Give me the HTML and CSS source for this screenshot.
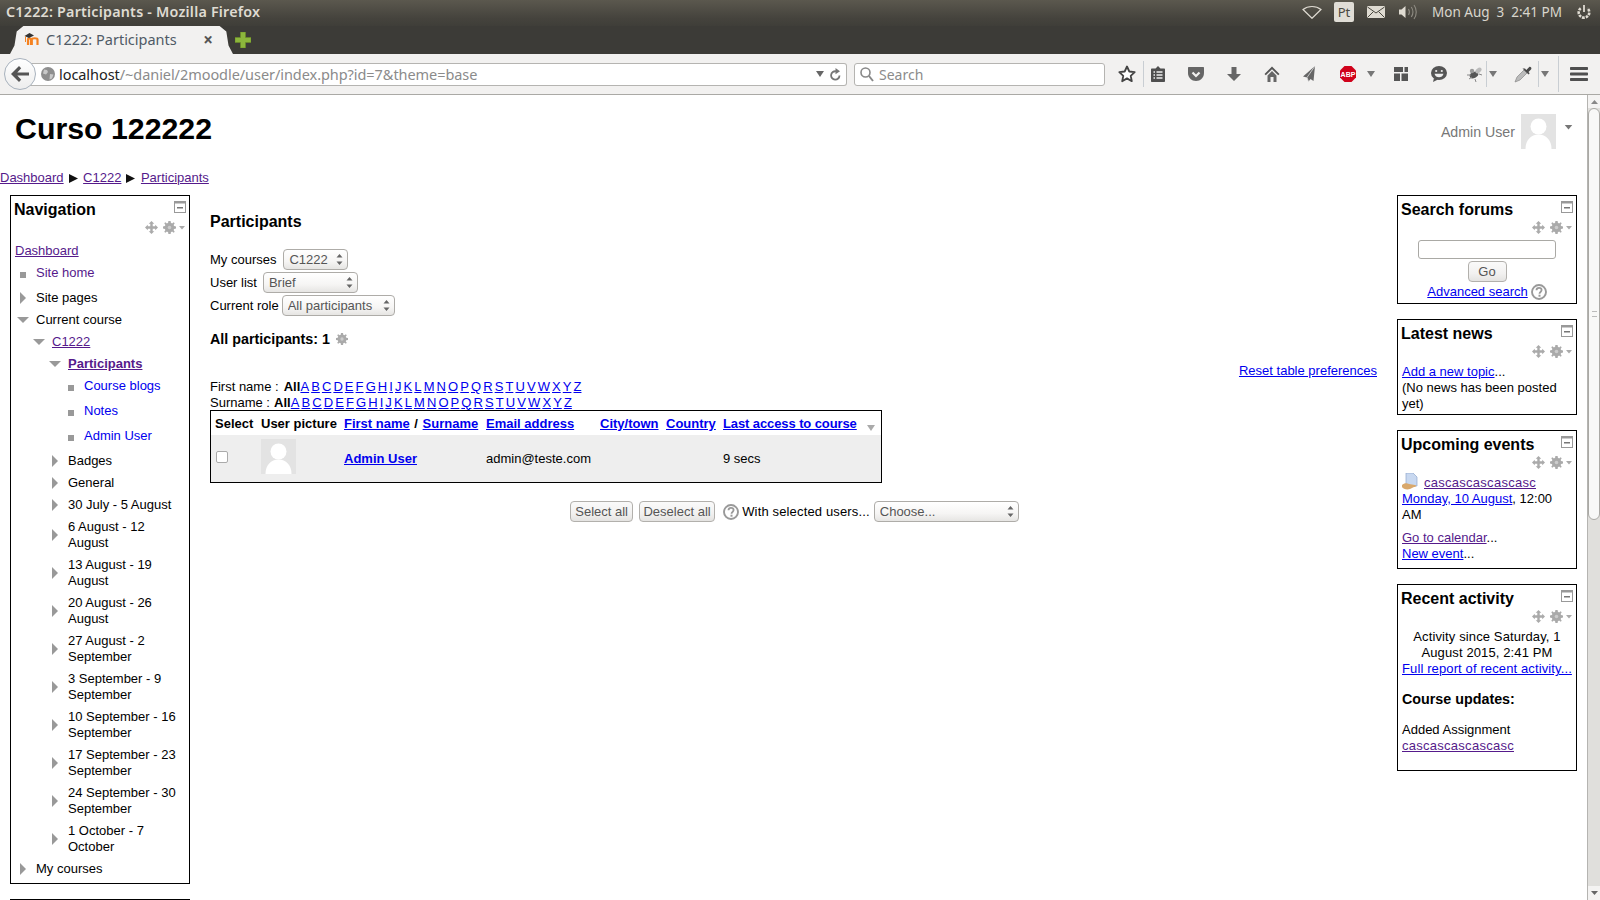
FILE: index.html
```html
<!DOCTYPE html>
<html lang="en">
<head>
<meta charset="utf-8">
<title>C1222: Participants</title>
<link rel="stylesheet" href="styles.css">
</head>
<body>
<svg class="defs" width="0" height="0">
  <symbol id="i-move" viewBox="0 0 14 14"><path d="M7 0l3 3H8.3v2.7H11V4l3 3-3 3V8.3H8.3V11H10l-3 3-3-3h1.700V8.300H3V10L0 7l3-3v1.700h2.700V3H4z" fill="#aaa"/></symbol>
  <symbol id="i-gear" viewBox="0 0 14 14"><path d="M5.800 0h2.400l.3 2 1.300.6L11.500 1.400l1.100 1.100-1.200 1.700.6 1.300 2 .3v2.400l-2 .3-.6 1.300 1.200 1.700-1.100 1.100-1.700-1.200-1.300.6-.3 2H5.800l-.3-2-1.300-.6-1.700 1.200-1.100-1.100 1.200-1.700-.6-1.300-2-.3V5.800l2-.3.6-1.300L1.400 2.500l1.100-1.100 1.700 1.200 1.300-.6z" fill="#aaa"/><circle cx="7" cy="7" r="1.900" fill="#ccc"/></symbol>
  <symbol id="i-caret" viewBox="0 0 6 4"><path d="M0 0h6L3 3.500z" fill="#aaa"/></symbol>
  <symbol id="i-collapse" viewBox="0 0 12 12"><rect x=".5" y=".5" width="11" height="11" fill="#fff" stroke="#999"/><rect x="1" y="1" width="10" height="1.500" fill="#999"/><rect x="3" y="6" width="6" height="1.500" fill="#777"/></symbol>
  <symbol id="i-right" viewBox="0 0 6 12"><path d="M0 0l6 6-6 6z" fill="#999"/></symbol>
  <symbol id="i-down" viewBox="0 0 12 6"><path d="M0 0h12L6 6z" fill="#999"/></symbol>
  <symbol id="i-avatar" viewBox="0 0 35 35"><rect width="35" height="35" fill="#e3e3e3"/><circle cx="17.500" cy="12.500" r="8" fill="#fff"/><path d="M4.500 35C4.500 26 10 20.500 17.500 20.500S30.500 26 30.500 35z" fill="#fff"/></symbol>
  <symbol id="i-help" viewBox="0 0 16 16"><circle cx="8" cy="8" r="7" fill="#fff" stroke="#999" stroke-width="1.900"/><path d="M5.500 6.300C5.500 4.800 6.600 3.900 8 3.900s2.600.9 2.600 2.200c0 1.900-2.100 1.800-2.100 3.600" fill="none" stroke="#999" stroke-width="1.800"/><rect x="7.500" y="10.700" width="2" height="2" fill="#999"/></symbol>
  <symbol id="i-spin" viewBox="0 0 7 13"><path d="M3.500 1L6.500 4.500H.5zM3.500 12L.5 8.500h6z" fill="#666"/></symbol>
  <symbol id="i-tri" viewBox="0 0 9 9"><path d="M0 0l9 4.500L0 9z" fill="#111"/></symbol>
  <symbol id="i-tcaret" viewBox="0 0 8 6"><path d="M0 0h8L4 6z" fill="#777"/></symbol>
</svg>

<div class="app">
  <header class="titlebar">
    <span class="wintitle">C1222: Participants - Mozilla Firefox</span>
    <div class="tray">
      <svg class="tr-wifi" width="20" height="14" viewBox="0 0 20 14"><path d="M1 4.500C6 .5 14 .5 19 4.500L10 13.300z" fill="none" stroke="#dfdbd2" stroke-width="1.200"/></svg>
      <span class="tr-pt">Pt</span>
      <svg class="tr-mail" width="18" height="12" viewBox="0 0 18 12"><rect width="18" height="12" rx="1" fill="#dfdbd2"/><path d="M.5 1L9 7l8.500-6M.5 11.500L6.500 5.500M17.500 11.500l-6-6" fill="none" stroke="#4a4840" stroke-width="1"/></svg>
      <svg class="tr-vol" width="20" height="16" viewBox="0 0 20 16"><path d="M1 5.500h2.500L7.500 2v12l-4-3.500H1z" fill="#dfdbd2"/><path d="M10.500 5c1.200 2 1.200 4 0 6M13.300 3c2 3 2 7 0 10M16 1c3 4 3 10 0 14" fill="none" stroke="#8f8c83" stroke-width="1.100"/></svg>
      <span class="clock">Mon Aug&nbsp; 3&nbsp; 2:41 PM</span>
      <svg class="tr-power" width="16" height="17" viewBox="0 0 16 17"><path d="M8 1v7" stroke="#dfdbd2" stroke-width="1.800" fill="none"/><path d="M4.700 4.200a5.300 5.300 0 1 0 6.600 0" stroke="#dfdbd2" stroke-width="2.600" stroke-dasharray="2.600 1" fill="none"/></svg>
    </div>
  </header>

  <div class="tabbar">
    <div class="tab">
      <svg class="favicon" width="16" height="14" viewBox="0 0 16 14"><path d="M4 13V7.500C4 6 6.500 6 7 7.500V13M7.800 13V7.500c0-1.700 5.700-1.700 5.700 0V13" fill="none" stroke="#f58220" stroke-width="2.200"/><path d="M.5 4L5.500 1 10 3.500 5 6z" fill="#333"/><path d="M1.500 4.500V10" stroke="#f58220" stroke-width="1"/></svg>
      <span class="tabname">C1222: Participants</span>
      <span class="tabclose">×</span>
    </div>
    <svg class="newtab" width="16" height="16" viewBox="0 0 16 16"><path d="M5.500 0h5v5.500H16v5h-5.500V16h-5v-5.500H0v-5h5.500z" fill="#8cb63c" stroke="#6b8e23" stroke-width=".6"/></svg>
  </div>

  <div class="toolbar">
    <div class="back"><svg width="18" height="16" viewBox="0 0 18 16"><path d="M8 0L0 8l8 8 2.200-2.200L6.300 9.600H18V6.400H6.300l3.900-4.200z" fill="#555"/></svg></div>
    <div class="urlbar">
      <svg class="globe" width="14" height="14" viewBox="0 0 14 14"><circle cx="7" cy="7" r="7" fill="#8e8e8e"/><path d="M3 2.500l3 .5 1 2-2 2.500-3-1zM9 7l3.500.5-1.500 4-2.500 1z" fill="#c9c9c9"/></svg>
      <span class="url"><span class="host">localhost</span>/~daniel/2moodle/user/index.php?id=7&amp;theme=base</span>
      <svg class="urlcaret" width="8" height="6" viewBox="0 0 8 6"><path d="M0 0h8L4 6z" fill="#666"/></svg>
      <svg class="reload" width="11" height="13" viewBox="0 0 11 13"><path d="M9.500 7.500A4.200 4.200 0 1 1 6 3.300" fill="none" stroke="#777" stroke-width="1.800"/><path d="M5.500 0l4.500 3.300-4.500 3z" fill="#777"/></svg>
    </div>
    <div class="searchbar">
      <svg width="14" height="15" viewBox="0 0 14 15"><circle cx="5.500" cy="5.500" r="4.500" fill="none" stroke="#888" stroke-width="1.600"/><path d="M9 9l4 5" stroke="#888" stroke-width="2"/></svg>
      <span>Search</span>
    </div>
    <div class="tools">
      <svg class="tool t-star" width="18" height="18" viewBox="0 0 18 18"><path d="M9 1.500l2.300 5 5.400.6-4 3.700 1.100 5.400L9 13.400l-4.800 2.800 1.100-5.400-4-3.700 5.400-.6z" fill="#fff" stroke="#444" stroke-width="1.800" stroke-linejoin="round"/></svg>
      <i class="sep s1"></i>
      <svg class="tool t-clip" width="18" height="18" viewBox="0 0 18 18"><path d="M3 3.500h3.500L9 1l2.500 2.500H15c.6 0 1 .4 1 1V16c0 .6-.4 1-1 1H3c-.6 0-1-.4-1-1V4.500c0-.6.4-1 1-1z" fill="#4f4f4f"/><path d="M4.500 7h1.500M7.500 7h6M4.500 10h1.500M7.500 10h6M4.500 13h1.500M7.500 13h6" stroke="#eee" stroke-width="1.400"/></svg>
      <svg class="tool t-pocket" width="18" height="18" viewBox="0 0 18 18"><path d="M2 2h14c.6 0 1 .4 1 1v5c0 4.500-3.600 8-8 8s-8-3.500-8-8V3c0-.6.4-1 1-1z" fill="#666"/><path d="M5.500 7.500L9 11l3.500-3.500" fill="none" stroke="#f2f1f0" stroke-width="2.200"/></svg>
      <svg class="tool t-dl" width="18" height="18" viewBox="0 0 18 18"><path d="M6.500 2h5v7H16l-7 7-7-7h4.500z" fill="#666"/></svg>
      <svg class="tool t-home" width="18" height="18" viewBox="0 0 18 18"><path d="M9 1.500L1.500 9l1.300 1.300L9 4.300l6.200 6L16.500 9z" fill="#555"/><path d="M4.500 10.500L9 6l4.500 4.500V17H10.500v-5h-3v5H4.500z" fill="#666"/></svg>
      <svg class="tool t-send" width="18" height="18" viewBox="0 0 18 18"><path d="M14 1L2 11.500l4 1 1.500 4 2-2.500 3 2z" fill="#666"/><path d="M14 1L6 12.500l1.500 4" fill="none" stroke="#ddd" stroke-width=".8"/></svg>
      <svg class="tool t-abp" width="18" height="18" viewBox="0 0 18 18"><path d="M5.500 1h7L17 5.500v7L12.500 17h-7L1 12.500v-7z" fill="#d0021b"/><text x="9" y="11.600" class="abp-text">ABP</text></svg>
      <svg class="tool t-c1" width="8" height="6" viewBox="0 0 8 6"><use href="#i-tcaret"/></svg>
      <svg class="tool t-grid" width="18" height="18" viewBox="0 0 18 18"><path d="M2 2h9v5H2zM12.500 2H16v5h-3.500zM2 8.500h6V16H2zM9.500 8.500H16V16H9.500z" fill="#555"/></svg>
      <svg class="tool t-chat" width="18" height="18" viewBox="0 0 18 18"><ellipse cx="9" cy="8" rx="8" ry="7" fill="#555"/><path d="M4 13l-1 4 5-2.500z" fill="#555"/><circle cx="6.200" cy="6" r="1.100" fill="#eee"/><circle cx="11.800" cy="6" r="1.100" fill="#eee"/><path d="M4.500 8.800h9c-.5 2.500-2.500 3.500-4.500 3.500s-4-1-4.500-3.500z" fill="#eee"/></svg>
      <svg class="tool t-bug" width="18" height="18" viewBox="0 0 18 18"><ellipse cx="8" cy="10" rx="4.500" ry="3" fill="#555" transform="rotate(-25 8 10)"/><ellipse cx="12.500" cy="5.500" rx="3.500" ry="2.200" fill="#bbb" transform="rotate(-40 12.500 5.500)"/><circle cx="6" cy="6" r="2.200" fill="#999"/><path d="M1 10l4 0M3 14l3-2M9 14l1 3M13 9l3 1" stroke="#888"/></svg>
      <i class="sep s2"></i>
      <svg class="tool t-c2" width="8" height="6" viewBox="0 0 8 6"><use href="#i-tcaret"/></svg>
      <svg class="tool t-drop" width="18" height="18" viewBox="0 0 18 18"><path d="M10 5L3 12l-2 5 5-2 7-7z" fill="#bbb" stroke="#888" stroke-width=".7"/><path d="M8.500 3.500l6 6 1.200-1.200-1.200-1.300 2.500-2.500c1.200-1.500-.5-3.500-2-2.300L12.300 5 11 3.500z" fill="#4a4a4a"/></svg>
      <i class="sep s3"></i>
      <svg class="tool t-c3" width="8" height="6" viewBox="0 0 8 6"><use href="#i-tcaret"/></svg>
      <i class="sep s4"></i>
      <svg class="tool t-ham" width="18" height="14" viewBox="0 0 18 14"><path d="M1 0h16c.6 0 1 .4 1 1v1c0 .6-.4 1-1 1H1C.4 3 0 2.600 0 2V1C0 .4.400 0 1 0zM1 5.500h16c.6 0 1 .4 1 1v1c0 .6-.4 1-1 1H1c-.6 0-1-.4-1-1v-1c0-.6.400-1 1-1zM1 11h16c.6 0 1 .4 1 1v1c0 .6-.4 1-1 1H1c-.6 0-1-.4-1-1v-1c0-.6.400-1 1-1z" fill="#4f4f4f"/></svg>
    </div>
  </div>

  <div class="viewport">
    <div class="page">
      <div class="pagehead">
        <h1>Curso 122222</h1>
        <div class="usermenu">
          <span class="username">Admin User</span>
          <svg class="avatar" width="35" height="35"><use href="#i-avatar"/></svg>
          <svg class="usercaret" width="9" height="5" viewBox="0 0 6 4"><path d="M0 0h6L3 3.500z" fill="#777"/></svg>
        </div>
      </div>
      <nav class="crumbs">
        <a class="v" href="#">Dashboard</a>
        <svg class="tri" width="9" height="9"><use href="#i-tri"/></svg>
        <a class="v" href="#">C1222</a>
        <svg class="tri" width="9" height="9"><use href="#i-tri"/></svg>
        <a class="v" href="#">Participants</a>
      </nav>

      <div class="columns">
        <aside class="col">
          <section class="block">
            <div class="bhead"><h2>Navigation</h2><svg class="collapse" width="12" height="12"><use href="#i-collapse"/></svg></div>
            <div class="bctl"><svg width="13" height="13"><use href="#i-move"/></svg><svg width="13" height="13"><use href="#i-gear"/></svg><svg width="6" height="4"><use href="#i-caret"/></svg></div>
            <div class="nav">
              <div class="nrow l0 noic"><a class="v" href="#">Dashboard</a></div>
              <div class="nrow leaf"><span class="nic"><i class="bullet"></i></span><a class="v" href="#">Site home</a></div>
              <div class="nrow"><span class="nic"><svg width="6" height="12"><use href="#i-right"/></svg></span><span>Site pages</span></div>
              <div class="nrow"><span class="nic"><svg width="12" height="6"><use href="#i-down"/></svg></span><span>Current course</span></div>
              <div class="nrow l1"><span class="nic"><svg width="12" height="6"><use href="#i-down"/></svg></span><a class="v" href="#">C1222</a></div>
              <div class="nrow l2"><span class="nic"><svg width="12" height="6"><use href="#i-down"/></svg></span><a class="v b" href="#">Participants</a></div>
              <div class="nrow l3 leaf"><span class="nic"><i class="bullet"></i></span><a href="#">Course blogs</a></div>
              <div class="nrow l3 leaf"><span class="nic"><i class="bullet"></i></span><a href="#">Notes</a></div>
              <div class="nrow l3 leaf"><span class="nic"><i class="bullet"></i></span><a href="#">Admin User</a></div>
              <div class="nrow l2"><span class="nic"><svg width="6" height="12"><use href="#i-right"/></svg></span><span>Badges</span></div>
              <div class="nrow l2"><span class="nic"><svg width="6" height="12"><use href="#i-right"/></svg></span><span>General</span></div>
              <div class="nrow l2"><span class="nic"><svg width="6" height="12"><use href="#i-right"/></svg></span><span>30 July - 5 August</span></div>
              <div class="nrow l2"><span class="nic"><svg width="6" height="12"><use href="#i-right"/></svg></span><span>6 August - 12 August</span></div>
              <div class="nrow l2"><span class="nic"><svg width="6" height="12"><use href="#i-right"/></svg></span><span>13 August - 19 August</span></div>
              <div class="nrow l2"><span class="nic"><svg width="6" height="12"><use href="#i-right"/></svg></span><span>20 August - 26 August</span></div>
              <div class="nrow l2"><span class="nic"><svg width="6" height="12"><use href="#i-right"/></svg></span><span>27 August - 2 September</span></div>
              <div class="nrow l2"><span class="nic"><svg width="6" height="12"><use href="#i-right"/></svg></span><span>3 September - 9 September</span></div>
              <div class="nrow l2"><span class="nic"><svg width="6" height="12"><use href="#i-right"/></svg></span><span>10 September - 16 September</span></div>
              <div class="nrow l2"><span class="nic"><svg width="6" height="12"><use href="#i-right"/></svg></span><span>17 September - 23 September</span></div>
              <div class="nrow l2"><span class="nic"><svg width="6" height="12"><use href="#i-right"/></svg></span><span>24 September - 30 September</span></div>
              <div class="nrow l2"><span class="nic"><svg width="6" height="12"><use href="#i-right"/></svg></span><span>1 October - 7 October</span></div>
              <div class="nrow"><span class="nic"><svg width="6" height="12"><use href="#i-right"/></svg></span><span>My courses</span></div>
            </div>
          </section>
          <section class="block stub"></section>
        </aside>

        <main class="main">
          <h2 class="ptitle">Participants</h2>
          <div class="formrows">
            <div class="frow"><label>My courses</label><span class="selwrap w-a"><select><option>C1222</option></select><svg width="7" height="13"><use href="#i-spin"/></svg></span></div>
            <div class="frow"><label>User list</label><span class="selwrap w-b"><select><option>Brief</option></select><svg width="7" height="13"><use href="#i-spin"/></svg></span></div>
            <div class="frow"><label>Current role</label><span class="selwrap w-c"><select><option>All participants</option></select><svg width="7" height="13"><use href="#i-spin"/></svg></span></div>
          </div>
          <h3 class="allp">All participants: 1 <svg width="12" height="12"><use href="#i-gear"/></svg></h3>
          <div class="reset"><a href="#">Reset table preferences</a></div>
          <div class="initials first"><span class="ilabel">First name :</span><b>All</b><a href="#">A</a><a href="#">B</a><a href="#">C</a><a href="#">D</a><a href="#">E</a><a href="#">F</a><a href="#">G</a><a href="#">H</a><a href="#">I</a><a href="#">J</a><a href="#">K</a><a href="#">L</a><a href="#">M</a><a href="#">N</a><a href="#">O</a><a href="#">P</a><a href="#">Q</a><a href="#">R</a><a href="#">S</a><a href="#">T</a><a href="#">U</a><a href="#">V</a><a href="#">W</a><a href="#">X</a><a href="#">Y</a><a href="#">Z</a></div>
          <div class="initials"><span class="ilabel">Surname :</span><b>All</b><a href="#">A</a><a href="#">B</a><a href="#">C</a><a href="#">D</a><a href="#">E</a><a href="#">F</a><a href="#">G</a><a href="#">H</a><a href="#">I</a><a href="#">J</a><a href="#">K</a><a href="#">L</a><a href="#">M</a><a href="#">N</a><a href="#">O</a><a href="#">P</a><a href="#">Q</a><a href="#">R</a><a href="#">S</a><a href="#">T</a><a href="#">U</a><a href="#">V</a><a href="#">W</a><a href="#">X</a><a href="#">Y</a><a href="#">Z</a></div>
          <table class="ptable">
            <colgroup><col class="c1"><col class="c2"><col class="c3"><col class="c4"><col class="c5"><col class="c6"><col class="c7"></colgroup>
            <thead>
              <tr><th>Select</th><th>User picture</th><th><a href="#">First name</a><span class="slash"> / </span><a href="#">Surname</a></th><th><a href="#">Email address</a></th><th><a href="#">City/town</a></th><th><a href="#">Country</a></th><th><a class="last" href="#">Last access to course</a><svg class="sortc" width="10" height="6" viewBox="0 0 8 6"><path d="M0 0h8L4 6z" fill="#aaa"/></svg></th></tr>
            </thead>
            <tbody>
              <tr><td class="cbcell"><input class="cb" type="checkbox"></td><td class="piccell"><svg class="pic" width="35" height="35"><use href="#i-avatar"/></svg></td><td><a class="b" href="#">Admin User</a></td><td>admin@teste.com</td><td></td><td></td><td>9 secs</td></tr>
            </tbody>
          </table>
          <div class="actions">
            <button class="btn" type="button">Select all</button>
            <button class="btn" type="button">Deselect all</button>
            <svg class="acthelp" width="16" height="16"><use href="#i-help"/></svg>
            <span class="actlabel">With selected users...</span>
            <span class="selwrap w-d"><select><option>Choose...</option></select><svg width="7" height="13"><use href="#i-spin"/></svg></span>
          </div>
        </main>

        <aside class="col">
          <section class="block">
            <div class="bhead"><h2>Search forums</h2><svg class="collapse" width="12" height="12"><use href="#i-collapse"/></svg></div>
            <div class="bctl"><svg width="13" height="13"><use href="#i-move"/></svg><svg width="13" height="13"><use href="#i-gear"/></svg><svg width="6" height="4"><use href="#i-caret"/></svg></div>
            <div class="bbody center">
              <input class="sinput" type="text">
              <button class="btn go" type="button">Go</button>
              <div class="adv"><a href="#">Advanced search</a><svg width="16" height="16"><use href="#i-help"/></svg></div>
            </div>
          </section>
          <section class="block">
            <div class="bhead"><h2>Latest news</h2><svg class="collapse" width="12" height="12"><use href="#i-collapse"/></svg></div>
            <div class="bctl"><svg width="13" height="13"><use href="#i-move"/></svg><svg width="13" height="13"><use href="#i-gear"/></svg><svg width="6" height="4"><use href="#i-caret"/></svg></div>
            <div class="bbody">
              <div><a href="#">Add a new topic</a>...</div>
              <div>(No news has been posted yet)</div>
            </div>
          </section>
          <section class="block">
            <div class="bhead"><h2>Upcoming events</h2><svg class="collapse" width="12" height="12"><use href="#i-collapse"/></svg></div>
            <div class="bctl"><svg width="13" height="13"><use href="#i-move"/></svg><svg width="13" height="13"><use href="#i-gear"/></svg><svg width="6" height="4"><use href="#i-caret"/></svg></div>
            <div class="bbody pb-up">
              <div class="evt"><svg width="17" height="17" viewBox="0 0 17 17"><path d="M4 0h7l4 4v9H4z" fill="#c8d8f0" stroke="#8fa8cc" stroke-width=".7"/><path d="M0 12c2-2 5-2 7-1l6 1c2 .5 1 2-1 2l-4 2c-3 1-7 0-8-2z" fill="#d9a86c"/></svg><a class="v cas" href="#">cascascascascasc</a></div>
              <div><a href="#">Monday, 10 August</a>, 12:00 AM</div>
              <div class="evfoot"><a class="v" href="#">Go to calendar</a>...</div>
              <div><a href="#">New event</a>...</div>
            </div>
          </section>
          <section class="block">
            <div class="bhead"><h2>Recent activity</h2><svg class="collapse" width="12" height="12"><use href="#i-collapse"/></svg></div>
            <div class="bctl"><svg width="13" height="13"><use href="#i-move"/></svg><svg width="13" height="13"><use href="#i-gear"/></svg><svg width="6" height="4"><use href="#i-caret"/></svg></div>
            <div class="bbody pb-rec">
              <div class="since">Activity since Saturday, 1 August 2015, 2:41 PM</div>
              <div class="nowrap"><a class="full" href="#">Full report of recent activity...</a></div>
              <h3 class="updates">Course updates:</h3>
              <div>Added Assignment</div>
              <div><a class="v cas" href="#">cascascascascasc</a></div>
            </div>
          </section>
        </aside>
      </div>
    </div>
    <div class="scrollbar">
      <div class="sb-up"><svg width="7" height="4" viewBox="0 0 7 4"><path d="M0 4L3.500 0 7 4z" fill="#888"/></svg></div>
      <div class="sb-thumb"><span class="grip"></span></div>
      <div class="sb-track"></div>
      <div class="sb-down"><svg width="7" height="4" viewBox="0 0 7 4"><path d="M0 0L3.500 4 7 0z" fill="#666"/></svg></div>
    </div>
  </div>
</div>
</body>
</html>
```

FILE: styles.css
```css
* { box-sizing: border-box; }
html, body { margin: 0; padding: 0; height: 100%; overflow: hidden; background: #fff; }
body { font: 13px/16px "Liberation Sans", Arial, sans-serif; color: #000; }
a { color: #0000ee; text-decoration: underline; }
a.v { color: #551a8b; }
.b { font-weight: bold; }
.defs { position: absolute; }
svg { display: block; flex: none; }

.app { height: 900px; display: flex; flex-direction: column; }

/* window chrome */
.titlebar { height: 26px; flex: none; display: flex; align-items: center; justify-content: space-between; padding-left: 6px; padding-bottom: 2px; background: linear-gradient(#5b584e, #45433d 70%, #3f3e39); color: #dfdbd2; font-family: "Noto Sans", sans-serif; }
.wintitle { font-size: 14.300px; font-weight: 600; letter-spacing: .22px; }
.tray { display: flex; align-items: center; }
.tr-pt { margin-left: 12px; width: 20px; height: 20px; background: #e0ddd6; border-radius: 2px; color: #4a4840; font-size: 13px; line-height: 20px; text-align: center; }
.tr-mail { margin-left: 13px; }
.tr-vol { margin-left: 13px; }
.clock { margin-left: 14px; font-size: 13.500px; color: #d9d6cd; white-space: nowrap; }
.tr-power { margin-left: 14px; margin-right: 8px; }

.tabbar { height: 28px; flex: none; display: flex; align-items: flex-start; background: #3c3b37; padding-left: 10px; }
.tab { width: 223px; height: 28px; display: flex; align-items: center; padding: 0 20px 2px 14px; background: #f2f1f0; border-radius: 12px 12px 0 0 / 14px 14px 0 0; clip-path: polygon(0 100%, 2% 70%, 3% 20%, 6% 0, 94% 0, 97% 20%, 98% 70%, 100% 100%); color: #4f5a66; font-family: "Noto Sans", sans-serif; font-size: 14.500px; }
.tabname { margin-left: 6px; flex: 1; white-space: nowrap; }
.tabclose { color: #555; font-size: 17px; font-weight: 700; line-height: 16px; margin-top: 2px; }
.newtab { margin: 6px 0 0 2px; }

.toolbar { height: 41px; flex: none; display: flex; align-items: center; position: relative; padding-left: 30px; background: #f2f1f0; border-bottom: 1px solid #aaa9a5; font-family: "Noto Sans", sans-serif; }
.back { position: absolute; left: 4px; top: 4px; width: 32px; height: 32px; border-radius: 50%; border: 1px solid #a8b2bd; background: linear-gradient(#fff, #ededed); display: flex; align-items: center; justify-content: center; z-index: 1; }
.urlbar { width: 817px; height: 23px; display: flex; align-items: center; padding: 0 5px 0 11px; background: #fff; border: 1px solid #b5b4b1; border-left: 0; border-radius: 0 3px 3px 0; }
.globe { margin-right: 4px; }
.url { flex: 1; color: #8b8b8b; font-size: 14.500px; white-space: nowrap; letter-spacing: -.06px; }
.host { color: #222; }
.urlcaret { margin-right: 6px; }
.searchbar { width: 251px; height: 23px; margin-left: 7px; display: flex; align-items: center; gap: 5px; padding-left: 5px; background: #fff; border: 1px solid #b5b4b1; border-radius: 3px; color: #8b8b8b; font-size: 14px; }
.searchbar span { padding-top: 1px; }
.tools { display: flex; align-items: center; }
.sep { display: block; width: 1px; height: 26px; background: #c9ced3; flex: none; }
.abp-text { font: bold 7px "Liberation Sans", sans-serif; fill: #fff; text-anchor: middle; }
.t-star { margin-left: 13px; }
.s1 { margin-left: 7px; }
.t-clip { margin-left: 5px; }
.t-pocket { margin-left: 20px; }
.t-dl { margin-left: 20px; }
.t-home { margin-left: 20px; }
.t-send { margin-left: 20px; }
.t-abp { margin-left: 20px; }
.t-c1 { margin-left: 10px; }
.t-grid { margin-left: 17px; }
.t-chat { margin-left: 20px; }
.t-bug { margin-left: 18px; }
.s2 { margin-left: 2px; }
.t-c2 { margin-left: 2px; }
.t-drop { margin-left: 17px; }
.s3 { margin-left: 6px; }
.t-c3 { margin-left: 2px; }
.s4 { margin-left: 9px; height: 36px; }
.t-ham { margin-left: 11px; }

/* page */
.viewport { flex: 1; min-height: 0; display: flex; }
.page { flex: 1; min-width: 0; overflow: hidden; }
.pagehead { height: 75px; display: flex; justify-content: space-between; align-items: flex-start; }
h1 { margin: 0; padding: 17px 0 0 15px; font-size: 30.300px; line-height: 34px; font-weight: bold; }
.usermenu { display: flex; align-items: flex-start; padding: 19px 14px 0 0; }
.username { color: #777; font-size: 14.200px; line-height: 37px; margin-right: 6px; }
.usercaret { margin: 11px 0 0 8px; }
.crumbs { height: 16px; display: flex; align-items: center; }
.tri { margin: 0 5.500px 0 5px; }
.columns { display: grid; grid-template-columns: 180px 1fr 180px; column-gap: 20px; padding: 9px 10px 0; }
.col { display: flex; flex-direction: column; gap: 15px; }

.block { border: 1px solid #000; }
.bhead { display: flex; justify-content: space-between; padding: 5px 3px 0 3px; }
.bhead h2 { margin: 0; font-size: 16px; line-height: 18px; font-weight: bold; }
.bctl { height: 17px; margin-bottom: 2px; display: flex; align-items: center; justify-content: flex-end; padding-right: 4px; }
.bctl svg + svg { margin-left: 5px; }
.bctl svg:last-child { margin-left: 3px; }
.bbody { padding: 2px 4px 2px; }
.center { display: flex; flex-direction: column; align-items: center; padding-bottom: 3px; }
.stub { height: 60px; }

.nav { padding: 2px 0 3px; }
.nrow { display: flex; align-items: center; padding: 3px 4px 3px 4px; }
.noic { padding-left: 4px; }
.nic { width: 21px; flex: none; display: flex; justify-content: center; padding-right: 6px; }
.nrow.l1 { padding-left: 20px; }
.nrow.l2 { padding-left: 36px; }
.nrow.l3 { padding-left: 52px; }
.leaf { padding-bottom: 6px; align-items: flex-start; }
.leaf a { text-decoration: none; }
.bullet { display: block; width: 6px; height: 6px; margin-top: 7px; background: #999; }

.main { min-width: 0; padding-top: 18px; }
.ptitle { margin: 0; font-size: 16px; line-height: 18px; font-weight: bold; }
.formrows { margin-top: 18px; }
.frow { height: 21px; margin-bottom: 2px; display: flex; align-items: center; gap: 5px; }
.selwrap { position: relative; display: block; height: 21px; flex: none; }
.selwrap select { display: block; width: 100%; height: 21px; padding: 0 14px 0 5px; appearance: none; border: 1px solid #aeaca8; border-radius: 4px; background: linear-gradient(#fff, #f6f5f4 60%, #e6e5e3); color: #555; font: 13px "Liberation Sans", sans-serif; }
.selwrap svg { position: absolute; right: 5px; top: 4px; pointer-events: none; }
.w-a { width: 65px; margin-left: 2px; }
.w-b { width: 95px; margin-left: 1px; }
.w-c { width: 113px; margin-left: -2px; }
.w-d { width: 145px; }
.allp { margin: 15px 0 0; display: flex; align-items: center; gap: 6px; font-size: 14.300px; line-height: 16px; font-weight: bold; }
.reset { margin-top: 16px; text-align: right; }
.initials { height: 15.500px; display: flex; line-height: 16px; gap: 2.080px; }
.initials .ilabel { margin-right: 2px; }
.initials.first .ilabel { margin-right: 3px; }
.initials b { margin-right: -2px; }
.ptable { width: 672px; table-layout: fixed; border-collapse: separate; border-spacing: 0; border: 1px solid #000; }
.c1 { width: 46px; } .c2 { width: 83px; } .c3 { width: 142px; } .c4 { width: 114px; } .c5 { width: 66px; } .c6 { width: 57px; } .c7 { width: 162px; }
.ptable th { height: 24px; padding: 5px 4px 3px; text-align: left; font-weight: bold; white-space: nowrap; line-height: 16px; }
.slash { margin: 0 1px; }
.last { letter-spacing: -.1px; }
.ptable td { background: #eee; padding: 4px; }
.ptable td.piccell { padding-bottom: 8px; }
.sortc { display: inline-block; margin: 0 0 -3px 9px; }
.cb { display: block; appearance: none; width: 12px; height: 12px; margin: 0 0 3px 1px; border: 1px solid #aaa; border-radius: 2px; background: #fff; }
.actions { margin-top: 18px; padding-left: 2px; display: flex; justify-content: center; align-items: center; }
.btn { height: 21px; padding: 0 4px; border: 1px solid #b2b0ac; border-radius: 4px; background: linear-gradient(#fafafa, #f2f1f0 60%, #e4e3e1); color: #555; font: 13px "Liberation Sans", sans-serif; }
.btn + .btn { margin-left: 6px; padding: 0 3.500px; }
.acthelp { margin-left: 8px; }
.actlabel { margin: 0 4px 0 3px; letter-spacing: .15px; }
.sinput { width: 138px; height: 19px; border: 1px solid #aaa9a5; border-radius: 3px; background: #fff; }
.go { width: 39px; margin-top: 2px; }
.adv { display: flex; align-items: center; gap: 3px; margin-top: 2px; height: 16px; }
.evt { display: flex; align-items: flex-start; gap: 5px; height: 18px; margin-top: -2px; }
.evt a { margin-top: 2px; }
.cas { letter-spacing: .27px; }
.full { letter-spacing: .12px; }
.evfoot { margin-top: 7px; }
.pb-up { padding-bottom: 6px; }
.pb-rec { padding-bottom: 16px; }
.since { text-align: center; letter-spacing: .12px; }
.nowrap { white-space: nowrap; }
.updates { margin: 14px 0 15px; font-size: 14.300px; line-height: 16px; font-weight: bold; }

.scrollbar { width: 13px; flex: none; display: flex; flex-direction: column; background: #e0dfdc; border-left: 1px solid #b5b4b1; }
.sb-up { height: 13px; flex: none; background: #f4f3f2; display: flex; justify-content: center; align-items: center; }
.sb-thumb { height: 412px; flex: none; width: 12px; display: flex; align-items: center; justify-content: center; background: #f8f8f7; border: 1px solid #aaa9a5; border-radius: 6px; }
.grip { display: block; width: 5px; height: 6px; border-top: 1px solid #bbb; border-bottom: 1px solid #bbb; }
.sb-track { flex: 1; }
.sb-down { height: 14px; flex: none; display: flex; justify-content: center; align-items: center; background: #f4f3f2; }
```
